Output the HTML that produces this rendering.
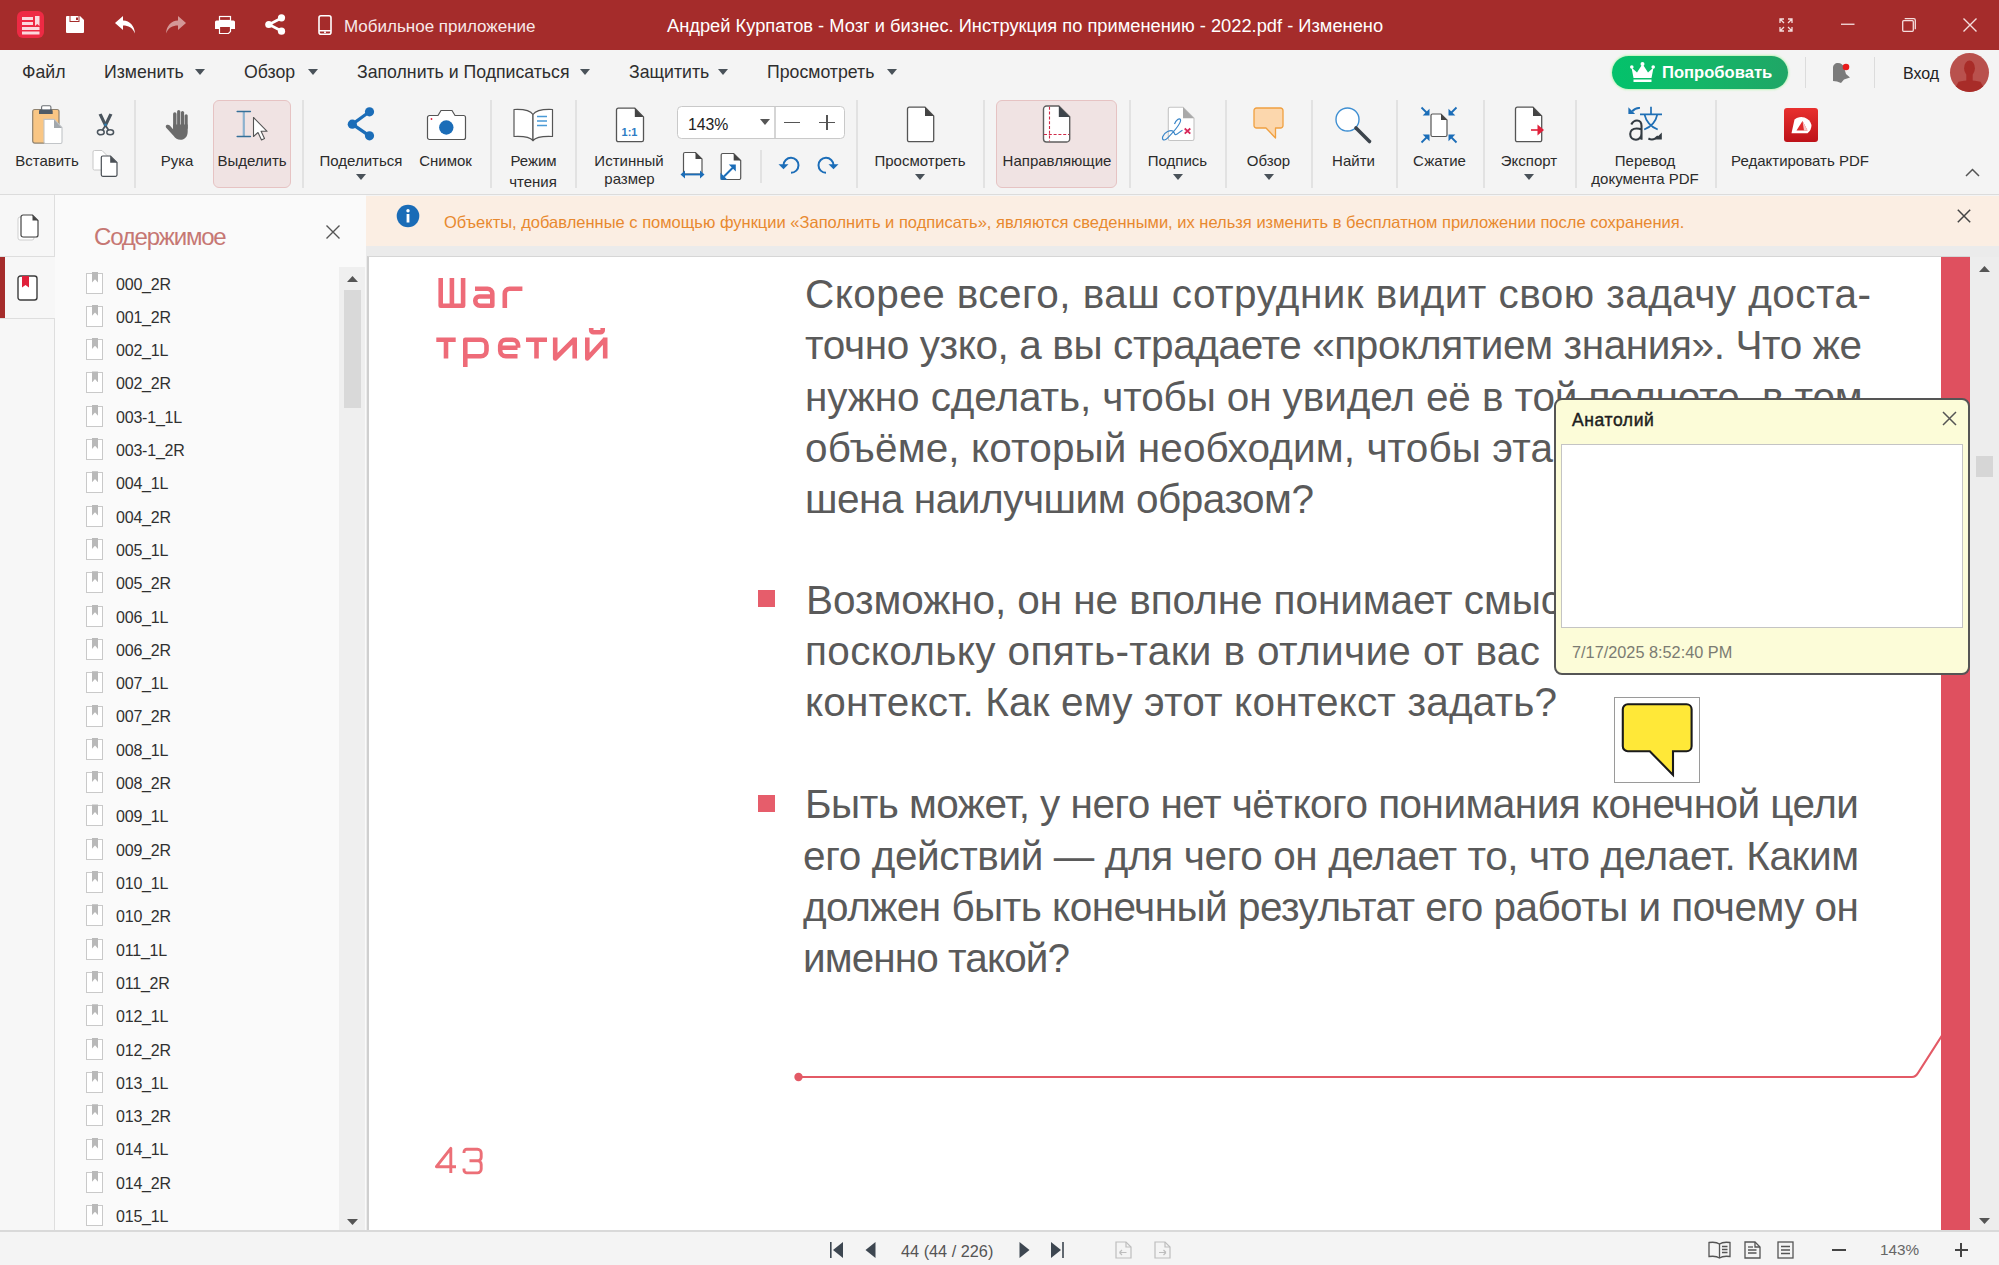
<!DOCTYPE html>
<html><head><meta charset="utf-8">
<style>
*{box-sizing:border-box;margin:0;padding:0}
html,body{width:1999px;height:1265px;overflow:hidden;background:#f4f4f4;font-family:"Liberation Sans",sans-serif;color:#222}
.a{position:absolute}
.t{position:absolute;white-space:nowrap;line-height:1}
svg{position:absolute;overflow:visible}
#title{left:0;top:0;width:1999px;height:50px;background:#a52c2b}
#menu{left:0;top:50px;width:1999px;height:45px;background:#f4f4f4}
#tool{left:0;top:95px;width:1999px;height:100px;background:#f4f4f4;border-bottom:1px solid #dcdcdc}
.sep{position:absolute;width:2px;background:#e2e2e2}
.lbl{position:absolute;white-space:nowrap;font-size:15px;line-height:1;color:#2b2b2b}
.dd{position:absolute;width:0;height:0;border-left:5px solid transparent;border-right:5px solid transparent;border-top:6px solid #4a5259}
.mi{position:absolute;white-space:nowrap;font-size:17.7px;line-height:1;color:#2e2e2e;top:64px}
.sel{position:absolute;background:#f0e3e3;border:1px solid #e6c3c3;border-radius:6px}
#rail{left:0;top:195px;width:55px;height:1035px;background:#f7f7f7}
#side{left:55px;top:195px;width:311px;height:1035px;background:#fafafa}
#view{left:366px;top:246px;width:1633px;height:984px;background:#ebebeb}
#banner{left:366px;top:196px;width:1633px;height:50px;background:#fbeee3}
#page{left:367px;top:256px;width:1603px;height:974px;background:#fff;border-top:1px solid #d6d6d6;border-left:2px solid #cfcfcf}
#status{left:0;top:1230px;width:1999px;height:35px;background:#f4f4f4;border-top:2px solid #d9d9d9}
.bm{position:absolute;left:86px;width:17px;height:21px;border:1.5px solid #c9c9c9;background:#fff}
.bm:after{content:"";position:absolute;left:5px;top:-2px;width:6px;height:11px;background:#b9b9b9;clip-path:polygon(0 0,100% 0,100% 100%,50% 70%,0 100%)}
.bt{position:absolute;left:116px;font-size:16px;letter-spacing:-0.2px;line-height:1;color:#303030;white-space:nowrap}
.doc{position:absolute;left:804px;font-size:40.5px;line-height:1;color:#5a5a5a;white-space:nowrap;letter-spacing:0.3px}
.bul{position:absolute;left:758px;width:16.5px;height:17px;background:#e65d6b}
</style></head><body>
<!-- TITLE BAR -->
<div id="title" class="a"></div>
<div class="t" style="left:344px;top:17.7px;font-size:17px;color:#f9e9e9">Мобильное приложение</div>
<div class="t" style="left:667px;top:17px;font-size:18.3px;color:#fff">Андрей Курпатов - Мозг и бизнес. Инструкция по применению - 2022.pdf - Изменено</div>

<!-- MENU -->
<div id="menu" class="a"></div>
<div class="mi" style="left:22px">Файл</div>
<div class="mi" style="left:104px">Изменить</div>
<div class="mi" style="left:244px">Обзор</div>
<div class="mi" style="left:357px">Заполнить и Подписаться</div>
<div class="mi" style="left:629px">Защитить</div>
<div class="mi" style="left:767px">Просмотреть</div>

<!-- TOOLBAR -->
<div id="tool" class="a"></div>

<!-- TITLE ICONS -->
<svg style="left:17px;top:11px" width="27" height="27" viewBox="0 0 27 27">
 <rect x="0" y="0" width="27" height="27" rx="6" fill="#ee2a44"/>
 <rect x="5" y="6" width="11" height="3" fill="#fbd9de"/>
 <rect x="5" y="11" width="11" height="3" fill="#fbd9de"/>
 <path d="M18 5h4.5v10l-2.25-2-2.25 2z" fill="#fbd9de"/>
 <rect x="5" y="16" width="17.5" height="3" fill="#fbd9de"/>
 <rect x="5" y="20.5" width="17.5" height="3" fill="#fbd9de"/>
</svg>
<svg style="left:66px;top:16px" width="18" height="17" viewBox="0 0 18 17">
 <path d="M0 1a1 1 0 0 1 1-1h13l4 4v12a1 1 0 0 1-1 1H1a1 1 0 0 1-1-1z" fill="#fff"/>
 <rect x="3.5" y="0" width="10" height="6" fill="#a52c2b"/>
 <rect x="4.5" y="0" width="8" height="5" fill="#fff"/>
 <rect x="10" y="1.5" width="2" height="2.5" fill="#a52c2b"/>
</svg>
<svg style="left:115px;top:16px" width="21" height="18" viewBox="0 0 21 18">
 <path d="M8 0L0 7l8 7V9.5c5.5 0 9.5 2 12 8C19.5 10 15 4.8 8 4.5z" fill="#fff"/>
</svg>
<svg style="left:165px;top:16px" width="21" height="18" viewBox="0 0 21 18">
 <path d="M13 0l8 7-8 7V9.5c-5.5 0-9.5 2-12 8C1.5 10 6 4.8 13 4.5z" fill="#d49897"/>
</svg>
<svg style="left:215px;top:16px" width="20" height="18" viewBox="0 0 20 18">
 <rect x="4.5" y="0.5" width="11" height="4" fill="none" stroke="#fff" stroke-width="1.2"/>
 <path d="M0 6a1.5 1.5 0 0 1 1.5-1.5h17A1.5 1.5 0 0 1 20 6v7h-4v-3H4v3H0z" fill="#fff"/>
 <path d="M4.5 10.5h11v5l-2 2h-9z" fill="none" stroke="#fff" stroke-width="1.2"/>
</svg>
<svg style="left:265px;top:14px" width="21" height="21" viewBox="0 0 21 21">
 <path d="M16.5 4L4 10.5 16.5 17" stroke="#fff" stroke-width="2.6" fill="none"/>
 <circle cx="16.5" cy="3.8" r="3.6" fill="#fff"/><circle cx="3.8" cy="10.5" r="3.6" fill="#fff"/><circle cx="16.5" cy="17.2" r="3.6" fill="#fff"/>
</svg>
<svg style="left:318px;top:15px" width="14" height="20" viewBox="0 0 14 20">
 <rect x="1" y="0.8" width="12" height="18.4" rx="2" fill="none" stroke="#fff" stroke-width="1.6"/>
 <rect x="1" y="15" width="12" height="1.5" fill="#fff"/>
 <circle cx="7" cy="17.3" r="1" fill="#fff"/>
</svg>
<!-- window controls -->
<svg style="left:1779px;top:18px" width="14" height="14" viewBox="0 0 14 14" fill="none" stroke="#f5dede" stroke-width="1.3">
 <path d="M1 5V1h4M1 1l4 4M9 1h4v4M13 1L9 5M1 9v4h4M1 13l4-4M13 9v4H9M13 13L9 9"/>
</svg>
<svg style="left:1841px;top:23px" width="14" height="3" viewBox="0 0 14 3"><rect x="0" y="0.6" width="13.5" height="1.3" fill="#f5dede"/></svg>
<svg style="left:1902px;top:18px" width="14" height="14" viewBox="0 0 14 14" fill="none" stroke="#f5dede" stroke-width="1.3">
 <rect x="0.7" y="2.7" width="10.6" height="10.6" rx="1"/><path d="M2.7 0.7h9.1a1.5 1.5 0 0 1 1.5 1.5v9.1"/>
</svg>
<svg style="left:1963px;top:18px" width="14" height="14" viewBox="0 0 14 14" stroke="#f5dede" stroke-width="1.4"><path d="M0.5 0.5l13 13M13.5 0.5l-13 13"/></svg>

<!-- MENU arrows -->
<div class="dd" style="left:195px;top:69px"></div>
<div class="dd" style="left:308px;top:69px"></div>
<div class="dd" style="left:580px;top:69px"></div>
<div class="dd" style="left:718px;top:69px"></div>
<div class="dd" style="left:887px;top:69px"></div>

<!-- Right of menu -->
<div class="a" style="left:1612px;top:56px;width:176px;height:33px;border-radius:17px;background:linear-gradient(90deg,#03c26b,#12b868 45%,#20a666);box-shadow:0 0 2px 1px rgba(175,245,165,0.75)"></div>
<svg style="left:1630px;top:62px" width="25" height="21" viewBox="0 0 25 21">
 <path d="M1.5 5.5l5.5 5 5.5-8.5 5.5 8.5 5.5-5-2 10.5h-18z" fill="#fff"/>
 <circle cx="1.8" cy="5" r="1.8" fill="#fff"/><circle cx="12.5" cy="2" r="2" fill="#fff"/><circle cx="23.2" cy="5" r="1.8" fill="#fff"/>
 <rect x="3.5" y="17.5" width="18" height="2.5" fill="#fff"/>
</svg>
<div class="t" style="left:1662px;top:64.5px;font-size:16.6px;font-weight:bold;color:#fff">Попробовать</div>
<div class="sep" style="left:1805px;top:57px;height:31px;width:1px;background:#dcdcdc"></div>
<svg style="left:1831px;top:62px" width="20" height="21" viewBox="0 0 20 21">
 <path d="M2 6c0-3 2-5 5-5s5 1.5 6 4.5l2 6.5 4 3.5-6 2-3 3.5-4-1.5L2 19z" fill="#7b7b7b"/>
 <circle cx="15" cy="5" r="3.3" fill="#e81b1b"/>
</svg>
<div class="sep" style="left:1874px;top:57px;height:31px;width:1px;background:#dcdcdc"></div>
<div class="t" style="left:1903px;top:65.5px;font-size:16px;color:#222">Вход</div>
<div class="a" style="left:1950px;top:53px;width:39px;height:39px;border-radius:50%;background:#b9514d;overflow:hidden">
 <svg style="left:0;top:0" width="39" height="39" viewBox="0 0 39 39"><ellipse cx="19.5" cy="15.2" rx="5.4" ry="7.6" fill="#a82c28"/><rect x="16.3" y="20" width="6.4" height="8" fill="#a82c28"/><path d="M3 39L8.5 28.8Q19.5 25.5 30.5 28.8L36 39z" fill="#a82c28"/></svg>
</div>

<!-- TOOLBAR separators -->
<div class="sep" style="left:134px;top:100px;height:88px"></div>
<div class="sep" style="left:302px;top:100px;height:88px"></div>
<div class="sep" style="left:490px;top:100px;height:88px"></div>
<div class="sep" style="left:575px;top:100px;height:88px"></div>
<div class="sep" style="left:760px;top:150px;height:33px"></div>
<div class="sep" style="left:856px;top:100px;height:88px"></div>
<div class="sep" style="left:983px;top:100px;height:88px"></div>
<div class="sep" style="left:1129px;top:100px;height:88px"></div>
<div class="sep" style="left:1225px;top:100px;height:88px"></div>
<div class="sep" style="left:1311px;top:100px;height:88px"></div>
<div class="sep" style="left:1396px;top:100px;height:88px"></div>
<div class="sep" style="left:1483px;top:100px;height:88px"></div>
<div class="sep" style="left:1575px;top:100px;height:88px"></div>
<div class="sep" style="left:1715px;top:100px;height:88px"></div>

<!-- selected buttons -->
<div class="sel" style="left:213px;top:100px;width:78px;height:88px"></div>
<div class="sel" style="left:996px;top:100px;width:121px;height:88px"></div>


<!-- TOOLBAR ICONS -->
<!-- paste -->
<svg style="left:32px;top:105px" width="31" height="40" viewBox="0 0 31 40">
 <rect x="0.7" y="4.5" width="26.3" height="33.6" rx="2" fill="#f9c684" stroke="#8f826f" stroke-width="1.2"/>
 <rect x="9.6" y="0.8" width="9.3" height="4.5" rx="1.3" fill="#fff" stroke="#6b6f73" stroke-width="1.1"/>
 <path d="M7 9V6a1.5 1.5 0 0 1 1.5-1.5h10.7A1.5 1.5 0 0 1 20.7 6v3z" fill="#4f5b66"/>
 <path d="M12 14.4h10l8 8v14.6a1.5 1.5 0 0 1-1.5 1.5H13.5a1.5 1.5 0 0 1-1.5-1.5z" fill="#fff" stroke="#c2c5c8" stroke-width="1.1"/>
 <path d="M22 14.4v8.5h8z" fill="#a2a7ac"/>
</svg>
<!-- cut -->
<svg style="left:96px;top:113px" width="19" height="23" viewBox="0 0 19 23">
 <path d="M2.6 1.6L5.6 0.6 11.2 12.2 8.6 14z" fill="#4a545d"/>
 <path d="M16.4 1.6L13.4 0.6 7.8 12.2 10.4 14z" fill="#4a545d"/>
 <path d="M9.5 12.5L6.5 17M9.5 12.5l3 4.5" stroke="#4a545d" stroke-width="1.8"/>
 <circle cx="9.5" cy="11.8" r="1.3" fill="#2a7fb5"/>
 <ellipse cx="4.8" cy="19.3" rx="3.4" ry="2.5" fill="none" stroke="#4a545d" stroke-width="1.5"/>
 <ellipse cx="14.2" cy="19.3" rx="3.4" ry="2.5" fill="none" stroke="#4a545d" stroke-width="1.5"/>
</svg>
<!-- copy -->
<svg style="left:92px;top:150px" width="26" height="27" viewBox="0 0 26 27">
 <path d="M1 2a1.5 1.5 0 0 1 1.5-1.5h7.5l5 5v13a1.5 1.5 0 0 1-1.5 1.5h-11A1.5 1.5 0 0 1 1 18.5z" fill="#fff" stroke="#c8c8c8" stroke-width="1"/>
 <path d="M9.3 7.5a1.5 1.5 0 0 1 1.5-1.5h7.7l6.5 6.5v12.3a1.5 1.5 0 0 1-1.5 1.5H10.8a1.5 1.5 0 0 1-1.5-1.5z" fill="#fff" stroke="#4a4f55" stroke-width="1.2"/>
 <path d="M18.2 6v6.8h6.8z" fill="#4a4f55"/>
</svg>
<!-- hand -->
<svg style="left:164px;top:108px" width="25" height="33" viewBox="0 0 25 33">
 <rect x="9.1" y="4.3" width="3.4" height="17" rx="1.7" fill="#6b6b6b"/>
 <rect x="13.1" y="2" width="3.2" height="19" rx="1.6" fill="#6b6b6b"/>
 <rect x="16.9" y="3" width="3.2" height="18" rx="1.6" fill="#6b6b6b"/>
 <rect x="20.6" y="6.2" width="3.1" height="15" rx="1.5" fill="#6b6b6b"/>
 <path d="M9.1 16.5H23.7V23.5c0 5.2-3 8.3-7.2 8.3-3 0-5.2-1.5-7-4L2.2 19.8c-.8-1.1-.5-2.5.8-3 1.1-.4 2.1 0 2.8.8L9.1 21.2z" fill="#6b6b6b"/>
</svg>
<!-- select -->
<svg style="left:236px;top:109px" width="34" height="32" viewBox="0 0 34 32">
 <path d="M7.8 2.5v25" stroke="#8cb2cf" stroke-width="2.2" fill="none"/><path d="M1.2 2.4h13.2M1.2 27.5h13.2" stroke="#346f98" stroke-width="1.5" stroke-linecap="round" fill="none"/>
 <path d="M17.5 8.5v19l4.5-4 3.5 7.5 3-1.4-3.4-7.3h6z" fill="#fff" stroke="#555" stroke-width="1.1" stroke-linejoin="round"/>
</svg>
<!-- share blue -->
<svg style="left:346px;top:106px" width="29" height="36" viewBox="0 0 29 36">
 <path d="M23.5 5.8L6.3 18.2 23.5 29.8" stroke="#1b6db8" stroke-width="3.2" fill="none"/>
 <circle cx="23.5" cy="5.8" r="4.6" fill="#1b6db8"/><circle cx="6.3" cy="18.2" r="4.6" fill="#1b6db8"/><circle cx="23.5" cy="29.8" r="4.6" fill="#1b6db8"/>
</svg>
<!-- camera -->
<svg style="left:427px;top:109px" width="39" height="32" viewBox="0 0 39 32">
 <path d="M2.5 6.5h8.5l3-5h11l3 5h8.5a2 2 0 0 1 2 2v20a2 2 0 0 1-2 2h-34a2 2 0 0 1-2-2v-20a2 2 0 0 1 2-2z" fill="#fff" stroke="#555" stroke-width="1.2"/>
 <circle cx="19.3" cy="18.5" r="7.2" fill="#1b6db8"/>
 <circle cx="4.5" cy="10" r="0.9" fill="#e0203a"/>
</svg>
<!-- book -->
<svg style="left:513px;top:108px" width="41" height="33" viewBox="0 0 41 33">
 <path d="M20 6.5C17 2 11 1 1 1.5v27c10-.5 16 .5 19 4z" fill="#fff" stroke="#555" stroke-width="1.2" stroke-linejoin="round"/>
 <path d="M20 6.5C23 2 29 1 39.5 1.5v27c-10.5-.5-16.5.5-19.5 4z" fill="#fff" stroke="#555" stroke-width="1.2" stroke-linejoin="round"/>
 <path d="M24 8.5h10M24 13h10M24 17.5h10" stroke="#4a9ad6" stroke-width="1.4"/>
</svg>
<!-- 1:1 -->
<svg style="left:615px;top:107px" width="30" height="36" viewBox="0 0 30 36">
 <path d="M1.5 3a1.8 1.8 0 0 1 1.8-1.8h16.5l8.7 8.7v23a1.8 1.8 0 0 1-1.8 1.8H3.3a1.8 1.8 0 0 1-1.8-1.8z" fill="#fff" stroke="#555" stroke-width="1.3"/>
 <path d="M19.8 1.2v8.7h8.7z" fill="#444"/>
 <text x="14.5" y="29" font-family="Liberation Sans" font-weight="bold" font-size="11" fill="#2c7cc4" text-anchor="middle">1:1</text>
</svg>
<!-- zoom box -->
<div class="a" style="left:677px;top:106px;width:168px;height:33px;background:#fff;border:1.5px solid #c9c9c9;border-radius:4.5px"></div>
<div class="a" style="left:774px;top:107px;width:1.5px;height:31px;background:#d5d5d5"></div>
<div class="t" style="left:688px;top:116.5px;font-size:15.8px;color:#222">143%</div>
<div class="dd" style="left:759.5px;top:119px;border-top-color:#555"></div>
<div class="a" style="left:784px;top:121.5px;width:16px;height:1.6px;background:#555"></div>
<div class="a" style="left:819px;top:121.5px;width:15.5px;height:1.6px;background:#555"></div>
<div class="a" style="left:826px;top:114.5px;width:1.6px;height:15.5px;background:#555"></div>
<!-- fit width -->
<svg style="left:680px;top:152px" width="25" height="28" viewBox="0 0 25 28">
 <path d="M3.5 2a1.5 1.5 0 0 1 1.5-1.5h10.5l6.5 6.5v13.5a1.5 1.5 0 0 1-1.5 1.5H5a1.5 1.5 0 0 1-1.5-1.5z" fill="#fff" stroke="#555" stroke-width="1.2"/>
 <path d="M15.5 0.5V7h6.5z" fill="#444"/>
 <path d="M3 22.5h19" stroke="#1b6db8" stroke-width="1.8"/>
 <path d="M0.5 22.5l4.5-4v8zM24.5 22.5l-4.5-4v8z" fill="#1b6db8"/>
</svg>
<!-- fit page -->
<svg style="left:720px;top:153px" width="23" height="28" viewBox="0 0 23 28">
 <path d="M1.2 2a1.5 1.5 0 0 1 1.5-1.5h11l7 7v17.5a1.5 1.5 0 0 1-1.5 1.5H2.7a1.5 1.5 0 0 1-1.5-1.5z" fill="#fff" stroke="#555" stroke-width="1.2"/>
 <path d="M13.7 0.5v7h7z" fill="#444"/>
 <path d="M4 23.5l9-9" stroke="#1b6db8" stroke-width="2"/>
 <path d="M0.5 26.8v-7l7 7zM15.8 11.5v7l-7-7z" fill="#1b6db8"/>
</svg>
<!-- rotate left -->
<svg style="left:778px;top:156px" width="23" height="19" viewBox="0 0 23 19">
 <path d="M5.5 9.2A7.5 7.5 0 1 1 13 16.8" fill="none" stroke="#1b6db8" stroke-width="2"/>
 <path d="M0.5 8.3h10l-5 5z" fill="#1b6db8"/>
</svg>
<!-- rotate right -->
<svg style="left:816px;top:156px" width="23" height="19" viewBox="0 0 23 19">
 <path d="M17.5 9.2A7.5 7.5 0 1 0 10 16.8" fill="none" stroke="#1b6db8" stroke-width="2"/>
 <path d="M22.5 8.3h-10l5 5z" fill="#1b6db8"/>
</svg>
<!-- view doc -->
<svg style="left:906px;top:106px" width="29" height="37" viewBox="0 0 29 37">
 <path d="M1.5 3a1.8 1.8 0 0 1 1.8-1.8h15.7l8.7 8.7v24a1.8 1.8 0 0 1-1.8 1.8H3.3a1.8 1.8 0 0 1-1.8-1.8z" fill="#fff" stroke="#555" stroke-width="1.3"/>
 <path d="M19 1.2v8.7h8.7z" fill="#444"/>
</svg>
<!-- guides -->
<svg style="left:1042px;top:105px" width="29" height="38" viewBox="0 0 29 38">
 <path d="M1.5 4a3 3 0 0 1 3-3h12.3l10.9 10.9v22.1a3 3 0 0 1-3 3H4.5a3 3 0 0 1-3-3z" fill="#fff" stroke="#5f5f5f" stroke-width="1.4"/>
 <path d="M16.8 1v10.9h10.9z" fill="#3e454b"/>
 <path d="M7.5 1.8v34.5M2 29.5h25" stroke="#d02a48" stroke-width="1.1" stroke-dasharray="3 1.8"/>
</svg>
<!-- signature -->
<svg style="left:1160px;top:106px" width="36" height="36" viewBox="0 0 36 36">
 <path d="M8.3 3a1.8 1.8 0 0 1 1.8-1.8h12.9l11 11v20.5a1.8 1.8 0 0 1-1.8 1.8H10.1a1.8 1.8 0 0 1-1.8-1.8z" fill="#fff" stroke="#c4c4c4" stroke-width="1.1"/>
 <path d="M23 1.2v11h11z" fill="#a9a9a9"/>
 <path d="M14.5 18C16 14 19.5 11.5 20.5 13.8 21.5 17 12.5 27 7.5 32.2 4.5 35.2 1.5 34.2 2.8 30.5 4.5 26 10.5 23.5 13.2 25.2 14.8 26.3 13.8 29 15.8 28.6 18 28.2 19.5 25.5 22.5 24.2" fill="none" stroke="#3a86c8" stroke-width="1.2"/>
 <path d="M24.7 22.5l5.6 5.2M30.3 22.5l-5.6 5.2" stroke="#d8285a" stroke-width="1.8"/>
</svg>
<!-- comment orange -->
<svg style="left:1253px;top:107px" width="31" height="33" viewBox="0 0 31 33">
 <path d="M3.5 1h24a2.5 2.5 0 0 1 2.5 2.5v15a2.5 2.5 0 0 1-2.5 2.5H22.5v10L13 21H3.5A2.5 2.5 0 0 1 1 18.5v-15A2.5 2.5 0 0 1 3.5 1z" fill="#fcd7ad" stroke="#f0a040" stroke-width="1.3" stroke-linejoin="round"/>
</svg>
<!-- search -->
<svg style="left:1335px;top:107px" width="37" height="36" viewBox="0 0 37 36">
 <circle cx="12.5" cy="12.5" r="11.5" fill="#fff" stroke="#3f8fd2" stroke-width="1.4"/>
 <path d="M21 21l13.5 13.5" stroke="#3c444c" stroke-width="3.6" stroke-linecap="round"/>
</svg>
<!-- compress -->
<svg style="left:1420px;top:106px" width="38" height="38" viewBox="0 0 38 38">
 <path d="M11 9.5a1.5 1.5 0 0 1 1.5-1.5h8.5l6 6v15a1.5 1.5 0 0 1-1.5 1.5h-13a1.5 1.5 0 0 1-1.5-1.5z" fill="#fff" stroke="#555" stroke-width="1.2"/>
 <path d="M21 8v6h6z" fill="#444"/>
 <g fill="#1b6db8">
  <path d="M1.5 1.5l6 6" stroke="#1b6db8" stroke-width="1.8"/><path d="M9.5 9.5v-6.8l-6.8 6.8z"/>
  <path d="M36.5 1.5l-6 6" stroke="#1b6db8" stroke-width="1.8"/><path d="M28.5 9.5v-6.8l6.8 6.8z"/>
  <path d="M1.5 36.5l6-6" stroke="#1b6db8" stroke-width="1.8"/><path d="M9.5 28.5v6.8l-6.8-6.8z"/>
  <path d="M36.5 36.5l-6-6" stroke="#1b6db8" stroke-width="1.8"/><path d="M28.5 28.5v6.8l6.8-6.8z"/>
 </g>
</svg>
<!-- export -->
<svg style="left:1514px;top:106px" width="31" height="37" viewBox="0 0 31 37">
 <path d="M1.5 3a1.8 1.8 0 0 1 1.8-1.8h15.7l8.7 8.7v24a1.8 1.8 0 0 1-1.8 1.8H3.3a1.8 1.8 0 0 1-1.8-1.8z" fill="#fff" stroke="#555" stroke-width="1.3"/>
 <path d="M19 1.2v8.7h8.7z" fill="#444"/>
 <path d="M17 24h8" stroke="#e0203a" stroke-width="1.6"/>
 <path d="M23.5 18.5l6.5 5.5-6.5 5.5z" fill="#e0203a"/>
</svg>
<!-- translate -->
<svg style="left:1627px;top:105px" width="37" height="37" viewBox="0 0 37 37" fill="none">
 <path d="M4.3 19.5C5.8 16.6 8 15.5 10 15.5 13 15.5 14.5 17.3 14.5 20.8V34.8M14.5 24.6C13 23.8 11.3 23.5 9.6 23.5 5.6 23.5 3.2 26 3.2 29.1 3.2 32.5 5.8 34.7 9 34.7 12 34.7 14.5 32.3 14.5 28.8" stroke="#333b42" stroke-width="2.1"/>
 <path d="M13 9.3h22M24 1.8v7.5M17.5 9.5C19 16 22 21 30.7 24.5M30.3 9.5C29 16 26 21 17.2 24.5" stroke="#1f6fb5" stroke-width="1.7"/>
 <path d="M12.9 3C10 2.6 7.8 3.4 5.2 6.2" stroke="#1f6fb5" stroke-width="2"/>
 <path d="M1.4 2.3V9.1H8.1z" fill="#1f6fb5"/>
 <path d="M21.4 33.5C24.5 35.2 28 34.6 31 31.2" stroke="#333b42" stroke-width="2"/>
 <path d="M34.8 27.4V34.6H27.8z" fill="#333b42"/>
</svg>
<!-- edit pdf -->
<svg style="left:1783px;top:107px" width="36" height="36" viewBox="0 0 36 36">
 <defs><linearGradient id="gr" x1="0" y1="0" x2="0" y2="1"><stop offset="0" stop-color="#e8302e"/><stop offset="1" stop-color="#bd1219"/></linearGradient></defs>
 <rect x="1" y="1" width="34" height="34" rx="3" fill="url(#gr)"/>
 <path d="M11.5 12.5A10.5 10.5 0 0 1 28.5 18a10.5 10.5 0 0 1-4 8.3H8.5z" fill="#fff"/>
 <path d="M13.5 23.5l6-9.5 5 9.5z" fill="#e02a2c"/>
 <path d="M19.5 14l5 9.5h-3.5z" fill="#f7c9c9"/>
</svg>
<!-- labels -->
<div class="lbl" style="left:-53px;width:200px;text-align:center;top:153px">Вставить</div>
<div class="lbl" style="left:77px;width:200px;text-align:center;top:153px">Рука</div>
<div class="lbl" style="left:152px;width:200px;text-align:center;top:153px">Выделить</div>
<div class="lbl" style="left:261px;width:200px;text-align:center;top:153px">Поделиться</div>
<div class="lbl" style="left:345.5px;width:200px;text-align:center;top:153px">Снимок</div>
<div class="lbl" style="left:433.5px;width:200px;text-align:center;top:153px">Режим</div>
<div class="lbl" style="left:433px;width:200px;text-align:center;top:174px">чтения</div>
<div class="lbl" style="left:529px;width:200px;text-align:center;top:153px">Истинный</div>
<div class="lbl" style="left:529.5px;width:200px;text-align:center;top:171px">размер</div>
<div class="lbl" style="left:820px;width:200px;text-align:center;top:153px">Просмотреть</div>
<div class="lbl" style="left:957px;width:200px;text-align:center;top:153px">Направляющие</div>
<div class="lbl" style="left:1077.5px;width:200px;text-align:center;top:153px">Подпись</div>
<div class="lbl" style="left:1168.5px;width:200px;text-align:center;top:153px">Обзор</div>
<div class="lbl" style="left:1253.5px;width:200px;text-align:center;top:153px">Найти</div>
<div class="lbl" style="left:1339.5px;width:200px;text-align:center;top:153px">Сжатие</div>
<div class="lbl" style="left:1429px;width:200px;text-align:center;top:153px">Экспорт</div>
<div class="lbl" style="left:1545px;width:200px;text-align:center;top:153px">Перевод</div>
<div class="lbl" style="left:1545px;width:200px;text-align:center;top:170.8px">документа PDF</div>
<div class="lbl" style="left:1700px;width:200px;text-align:center;top:153px">Редактировать PDF</div>

<!-- dropdown arrows under labels -->
<div class="dd" style="left:356px;top:174px"></div>
<div class="dd" style="left:915px;top:174px"></div>
<div class="dd" style="left:1172.5px;top:174px"></div>
<div class="dd" style="left:1263.5px;top:174px"></div>
<div class="dd" style="left:1524px;top:174px"></div>
<svg style="left:1965px;top:168px" width="15" height="9" viewBox="0 0 15 9"><path d="M1 8l6.5-6.5L14 8" fill="none" stroke="#555" stroke-width="1.5"/></svg>


<!-- LEFT -->
<div id="rail" class="a"></div>
<div id="side" class="a"></div>
<div class="t" style="left:94px;top:224.8px;font-size:24px;letter-spacing:-1.2px;color:#c67773">Содержимое</div>

<!-- rail tabs -->
<div class="a" style="left:0;top:195px;width:55px;height:62px;border-right:1px solid #dedede;border-bottom:1px solid #dedede;background:#f7f7f7"></div>
<svg style="left:17px;top:214px" width="22" height="27" viewBox="0 0 22 27">
 <path d="M1 5a2 2 0 0 1 2-2h2v18a2 2 0 0 0 2 2h10v1a2 2 0 0 1-2 2H3a2 2 0 0 1-2-2z" fill="#fff" stroke="#cfcfcf" stroke-width="1"/>
 <path d="M4 3a2 2 0 0 1 2-2h9.5L21 6.5V21a2 2 0 0 1-2 2H6a2 2 0 0 1-2-2z" fill="#fff" stroke="#444" stroke-width="1.2"/>
 <path d="M15.5 1v5.5H21z" fill="#444"/>
</svg>
<div class="a" style="left:0;top:257px;width:5px;height:61px;background:#a52c2b"></div>
<div class="a" style="left:0;top:318px;width:55px;height:912px;border-top:1px solid #dedede;border-right:1px solid #dedede;background:#f7f7f7"></div>
<svg style="left:17px;top:275px" width="21" height="26" viewBox="0 0 21 26">
 <rect x="1" y="1" width="19" height="24" rx="2.5" fill="#fff" stroke="#3c3c3c" stroke-width="1.4"/>
 <path d="M5 1h7v11.5l-3.5-2.6-3.5 2.6z" fill="#e0203a"/>
</svg>
<div class="a" style="left:325px;top:224px;width:16px;height:16px">
 <svg style="left:0;top:0" width="16" height="16" viewBox="0 0 16 16"><path d="M1.5 1.5l13 13M14.5 1.5l-13 13" stroke="#555" stroke-width="1.4"/></svg>
</div>
<!-- sidebar scrollbar -->
<div class="a" style="left:339px;top:267px;width:26px;height:963px;background:#efefef"></div>
<div class="a" style="left:344px;top:290px;width:17px;height:118px;background:#d9d9d9"></div>
<svg style="left:346px;top:275px" width="13" height="8" viewBox="0 0 13 8"><path d="M1 7l5.5-6L12 7z" fill="#555"/></svg>
<svg style="left:346px;top:1218px" width="13" height="8" viewBox="0 0 13 8"><path d="M1 1l5.5 6L12 1z" fill="#555"/></svg>
<div class="bm" style="top:272.5px"></div><div class="bt" style="top:276.5px">000_2R</div>
<div class="bm" style="top:305.8px"></div><div class="bt" style="top:309.8px">001_2R</div>
<div class="bm" style="top:339.1px"></div><div class="bt" style="top:343.1px">002_1L</div>
<div class="bm" style="top:372.4px"></div><div class="bt" style="top:376.4px">002_2R</div>
<div class="bm" style="top:405.7px"></div><div class="bt" style="top:409.7px">003-1_1L</div>
<div class="bm" style="top:439.0px"></div><div class="bt" style="top:443.0px">003-1_2R</div>
<div class="bm" style="top:472.3px"></div><div class="bt" style="top:476.3px">004_1L</div>
<div class="bm" style="top:505.6px"></div><div class="bt" style="top:509.6px">004_2R</div>
<div class="bm" style="top:539.0px"></div><div class="bt" style="top:542.9px">005_1L</div>
<div class="bm" style="top:572.3px"></div><div class="bt" style="top:576.2px">005_2R</div>
<div class="bm" style="top:605.6px"></div><div class="bt" style="top:609.5px">006_1L</div>
<div class="bm" style="top:638.9px"></div><div class="bt" style="top:642.8px">006_2R</div>
<div class="bm" style="top:672.2px"></div><div class="bt" style="top:676.1px">007_1L</div>
<div class="bm" style="top:705.5px"></div><div class="bt" style="top:709.4px">007_2R</div>
<div class="bm" style="top:738.8px"></div><div class="bt" style="top:742.8px">008_1L</div>
<div class="bm" style="top:772.1px"></div><div class="bt" style="top:776.1px">008_2R</div>
<div class="bm" style="top:805.4px"></div><div class="bt" style="top:809.4px">009_1L</div>
<div class="bm" style="top:838.7px"></div><div class="bt" style="top:842.7px">009_2R</div>
<div class="bm" style="top:872.0px"></div><div class="bt" style="top:876.0px">010_1L</div>
<div class="bm" style="top:905.3px"></div><div class="bt" style="top:909.3px">010_2R</div>
<div class="bm" style="top:938.6px"></div><div class="bt" style="top:942.6px">011_1L</div>
<div class="bm" style="top:971.9px"></div><div class="bt" style="top:975.9px">011_2R</div>
<div class="bm" style="top:1005.3px"></div><div class="bt" style="top:1009.2px">012_1L</div>
<div class="bm" style="top:1038.6px"></div><div class="bt" style="top:1042.5px">012_2R</div>
<div class="bm" style="top:1071.9px"></div><div class="bt" style="top:1075.8px">013_1L</div>
<div class="bm" style="top:1105.2px"></div><div class="bt" style="top:1109.1px">013_2R</div>
<div class="bm" style="top:1138.5px"></div><div class="bt" style="top:1142.4px">014_1L</div>
<div class="bm" style="top:1171.8px"></div><div class="bt" style="top:1175.7px">014_2R</div>
<div class="bm" style="top:1205.1px"></div><div class="bt" style="top:1209.1px">015_1L</div>

<!-- VIEW -->
<div id="view" class="a"></div>
<div id="banner" class="a"></div>
<div class="t" style="left:444px;top:214px;font-size:16.5px;color:#e8892f">Объекты, добавленные с помощью функции «Заполнить и подписать», являются сведенными, их нельзя изменить в бесплатном приложении после сохранения.</div>

<svg style="left:396px;top:204px" width="24" height="24" viewBox="0 0 24 24">
 <circle cx="12" cy="12" r="11.3" fill="#1a6cb7"/>
 <circle cx="12" cy="6.8" r="1.7" fill="#fff"/>
 <rect x="10.6" y="10" width="2.8" height="8.5" fill="#fff"/>
</svg>
<svg style="left:1957px;top:209px" width="14" height="14" viewBox="0 0 14 14"><path d="M0.8 0.8l12.4 12.4M13.2 0.8L0.8 13.2" stroke="#444" stroke-width="1.5"/></svg>
<div id="page" class="a"></div>
<div class="doc" style="left:805px;top:274.2px;letter-spacing:0.442px">Скорее всего, ваш сотрудник видит свою задачу доста-</div>
<div class="doc" style="left:805px;top:325.4px;letter-spacing:-0.389px">точно узко, а вы страдаете «проклятием знания». Что же</div>
<div class="doc" style="left:805px;top:376.6px;letter-spacing:-0.108px">нужно сделать, чтобы он увидел её в той полноте, в том</div>
<div class="doc" style="left:805px;top:427.8px;letter-spacing:0.114px">объёме, который необходим, чтобы эта задача была ре-</div>
<div class="doc" style="left:805px;top:479.0px;letter-spacing:-0.463px">шена наилучшим образом?</div>
<div class="doc" style="left:806px;top:580.0px;letter-spacing:-0.07px">Возможно, он не вполне понимает смысл задачи,</div>
<div class="doc" style="left:805px;top:631.2px;letter-spacing:0.368px">поскольку опять-таки в отличие от вас не знает всего</div>
<div class="doc" style="left:805px;top:682.4px;letter-spacing:0.162px">контекст. Как ему этот контекст задать?</div>
<div class="doc" style="left:805px;top:784.4px;letter-spacing:-0.52px">Быть может, у него нет чёткого понимания конечной цели</div>
<div class="doc" style="left:803px;top:835.6px;letter-spacing:-0.379px">его действий — для чего он делает то, что делает. Каким</div>
<div class="doc" style="left:803px;top:886.8px;letter-spacing:-0.529px">должен быть конечный результат его работы и почему он</div>
<div class="doc" style="left:803px;top:938.0px;letter-spacing:-0.914px">именно такой?</div>
<div class="bul" style="top:590px"></div>
<div class="bul" style="top:794.5px"></div>
<!-- Шаг третий -->
<svg style="left:0;top:0" width="1999" height="1265" viewBox="0 0 1999 1265" fill="none" stroke="#ee6b78" stroke-width="4.6" stroke-linejoin="round">
 <path d="M440.7 278v27.7h22.4V278M451.9 278v27.7"/>
 <path d="M475 288.8h12.5a4.8 4.8 0 0 1 4.8 4.8V305.7H480a4.7 4.7 0 0 1-4.7-4.7v-0.5a4 4 0 0 1 4-4h13"/>
 <path d="M504.8 308v-14.5a4.7 4.7 0 0 1 4.7-4.7h12.9"/>
 <path d="M436.3 339.8h19.4M446 339.8v18.7"/>
 <path d="M465.3 367v-27.2h15.5a5.7 5.7 0 0 1 5.7 5.7v5a5.7 5.7 0 0 1-5.7 5.7h-15.5"/>
 <path d="M517.5 347.8H500.2v-2.3a5.7 5.7 0 0 1 5.7-5.7h6.5a5.7 5.7 0 0 1 5.7 5.7v2.3M500.2 347.8v2.7a5.7 5.7 0 0 0 5.7 5.7h11.6"/>
 <path d="M526 339.8h21M536.5 339.8v18.7"/>
 <path d="M555.2 337.5v21l19.5-19.5M574.7 337.5v21"/>
 <path d="M587.3 337.5v21l17.9-19.5M605.2 337.5v21"/>
 <path d="M591.2 328v2.3a2 2 0 0 0 2 2h7.5a2 2 0 0 0 2-2V328"/>
</svg>
<svg style="left:0;top:0" width="1999" height="1265" viewBox="0 0 1999 1265" fill="none" stroke="#ec6f77" stroke-width="2.9" stroke-linejoin="round">
 <path d="M456 1166.7h-19.6l14.4-18.4v24.8"/>
 <path d="M464 1153v-1a2.8 2.8 0 0 1 2.8-2.8h10.6a3.8 3.8 0 0 1 3.8 3.8v4.2a3.6 3.6 0 0 1-3.6 3.6h-8.1M477.6 1160.8a3.6 3.6 0 0 1 3.6 3.6v4.7a3.8 3.8 0 0 1-3.8 3.8h-10.6a2.8 2.8 0 0 1-2.8-2.8v-1.5"/>
</svg>
<!-- red line -->
<svg style="left:0;top:0" width="1999" height="1265" viewBox="0 0 1999 1265" fill="none">
 <path d="M798 1077h1114c3 0 4.5-1.5 6-4l24-37.5" stroke="#e35a66" stroke-width="2.2"/>
 <circle cx="798.5" cy="1077" r="4.2" fill="#e35a66"/>
</svg>
<!-- red band -->
<div class="a" style="left:1940.5px;top:257px;width:29.5px;height:973px;background:#df505f"></div>
<!-- doc scrollbar -->
<div class="a" style="left:1970px;top:257px;width:29px;height:973px;background:#ededed"></div>
<div class="a" style="left:1976px;top:456px;width:17px;height:21px;background:#d6d6d6"></div>
<svg style="left:1978px;top:265px" width="13" height="8" viewBox="0 0 13 8"><path d="M1 7l5.5-6L12 7z" fill="#555"/></svg>
<svg style="left:1978px;top:1217px" width="13" height="8" viewBox="0 0 13 8"><path d="M1 1l5.5 6L12 1z" fill="#555"/></svg>
<!-- comment icon -->
<div class="a" style="left:1614px;top:697px;width:86px;height:86px;background:#fff;border:1px solid #9a9a9a"></div>
<svg style="left:1620px;top:701px" width="76" height="76" viewBox="0 0 76 76">
 <path d="M7.8 3.2h58.8a5 5 0 0 1 5 5v37a5 5 0 0 1-5 5H53v23.7L29.8 50.2H7.8a5 5 0 0 1-5-5v-37a5 5 0 0 1 5-5z" fill="#ffe838" stroke="#1a1a1a" stroke-width="2.1" stroke-linejoin="miter"/>
</svg>
<!-- popup -->
<div class="a" style="left:1554px;top:398px;width:416px;height:277px;background:#fcfcd8;border:2px solid #555;border-radius:8px"></div>
<div class="t" style="left:1572px;top:412px;font-size:17.5px;letter-spacing:0.6px;-webkit-text-stroke:0.45px #1e1e1e;color:#1e1e1e">Анатолий</div>
<svg style="left:1942px;top:411px" width="15" height="15" viewBox="0 0 15 15"><path d="M1 1l13 13M14 1L1 14" stroke="#555" stroke-width="1.5"/></svg>
<div class="a" style="left:1561px;top:444px;width:402px;height:184px;background:#fff;border:1.5px solid #c4c4c4"></div>
<div class="t" style="left:1572px;top:644px;font-size:16.3px;color:#7b7b72">7/17/2025 8:52:40 PM</div>


<!-- STATUS -->
<div id="status" class="a"></div>

<svg style="left:830px;top:1242px" width="14" height="16" viewBox="0 0 14 16"><rect x="0" y="0" width="1.6" height="16" fill="#3d4650"/><path d="M13 0v16L3 8z" fill="#3d4650"/></svg>
<svg style="left:865px;top:1242px" width="11" height="16" viewBox="0 0 11 16"><path d="M10.5 0v16L0.5 8z" fill="#3d4650"/></svg>
<div class="t" style="left:901px;top:1242.5px;font-size:16.3px;color:#555">44 (44 / 226)</div>
<svg style="left:1019px;top:1242px" width="11" height="16" viewBox="0 0 11 16"><path d="M0.5 0v16l10-8z" fill="#3d4650"/></svg>
<svg style="left:1050px;top:1242px" width="14" height="16" viewBox="0 0 14 16"><path d="M1 0v16l10-8z" fill="#3d4650"/><rect x="12.2" y="0" width="1.6" height="16" fill="#3d4650"/></svg>
<svg style="left:1115px;top:1241px" width="17" height="18" viewBox="0 0 17 18" fill="none" stroke="#bdbdbd" stroke-width="1.2">
 <path d="M1 1h10l5 5v11H1z"/><path d="M11 1v5h5"/><path d="M4.5 11.5h7M4.5 11.5l2.5-2.5M4.5 11.5l2.5 2.5"/>
</svg>
<svg style="left:1154px;top:1241px" width="17" height="18" viewBox="0 0 17 18" fill="none" stroke="#bdbdbd" stroke-width="1.2">
 <path d="M1 1h10l5 5v11H1z"/><path d="M11 1v5h5"/><path d="M5 11.5h7M12 11.5l-2.5-2.5M12 11.5l-2.5 2.5"/>
</svg>
<svg style="left:1708px;top:1241px" width="23" height="18" viewBox="0 0 23 18" fill="none" stroke="#555" stroke-width="1.3">
 <path d="M11.5 3C9 1.2 5 1 1 1.5v14c4-.5 8-.3 10.5 1.5 2.5-1.8 6.5-2 10.5-1.5v-14c-4-.5-8-.3-10.5 1.5z"/><path d="M11.5 3v14"/><path d="M14 5.5h5.5M14 8.5h5.5M14 11.5h5.5"/>
</svg>
<svg style="left:1744px;top:1241px" width="17" height="18" viewBox="0 0 17 18" fill="none" stroke="#555" stroke-width="1.3">
 <path d="M1 1h10l5 5v11H1z"/><path d="M11 1v5h5"/><path d="M4 9h8.5M4 12h8.5"/><path d="M4 6h5"/>
</svg>
<svg style="left:1777px;top:1241px" width="17" height="18" viewBox="0 0 17 18" fill="none" stroke="#555" stroke-width="1.3">
 <rect x="1" y="1" width="15" height="16"/><path d="M4 5.5h9M4 9h9M4 12.5h9"/>
</svg>
<div class="a" style="left:1832px;top:1249px;width:13.5px;height:1.8px;background:#444"></div>
<div class="t" style="left:1880px;top:1241.5px;font-size:15.3px;color:#666">143%</div>
<div class="a" style="left:1954.5px;top:1249px;width:13.5px;height:1.8px;background:#444"></div>
<div class="a" style="left:1960.4px;top:1243.2px;width:1.8px;height:13.5px;background:#444"></div>

</body></html>
